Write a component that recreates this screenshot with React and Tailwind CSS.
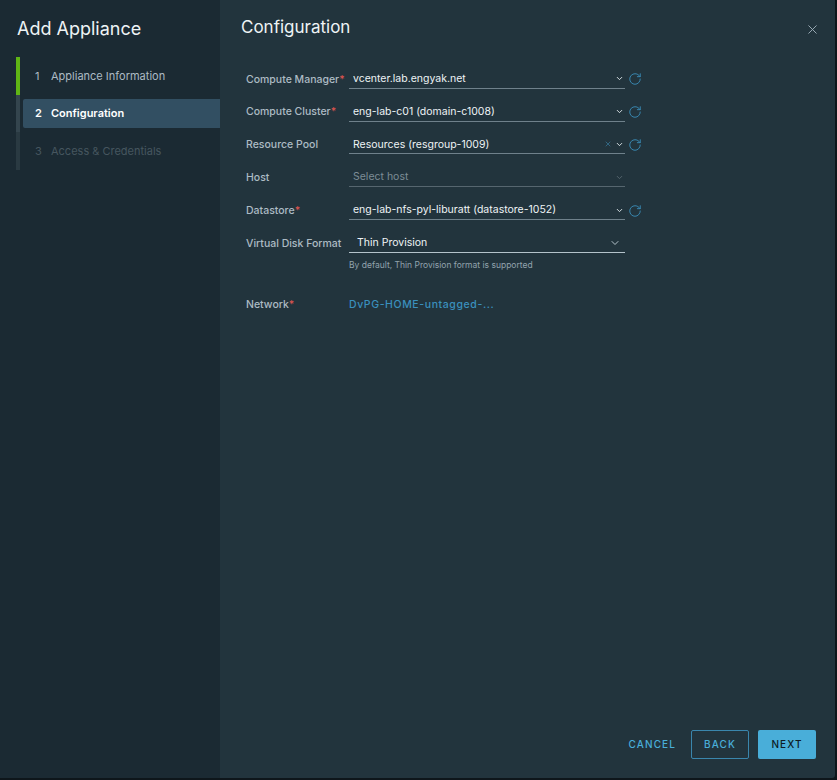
import React from "react";
import { ChevronDown, RotateCw, X } from "lucide-react";

const steps = [
  { num: "1", label: "Appliance Information", bar: "bg-[#60b515]", text: "text-[#adbbc4]" },
  { num: "2", label: "Configuration", bar: "bg-[#34454e]", text: "text-white font-semibold", active: true },
  { num: "3", label: "Access & Credentials", bar: "bg-[#2a3a42]", text: "text-[#46565f]" },
];

const fields = [
  { label: "Compute Manager", required: true, value: "vcenter.lab.engyak.net", left: "pl-[5px]" },
  { label: "Compute Cluster", required: true, value: "eng-lab-c01 (domain-c1008)" },
  { label: "Resource Pool", value: "Resources (resgroup-1009)", clear: true },
  { label: "Host", value: "Select host", disabled: true },
  { label: "Datastore", required: true, value: "eng-lab-nfs-pyl-liburatt (datastore-1052)" },
];

function FieldLabel({ label, required }) {
  return (
    <div className="w-[103px] shrink-0 whitespace-nowrap text-[10.5px] font-medium text-[#adbbc4]">
      {label}
      {required && <span className="text-[#d9534f]">*</span>}
    </div>
  );
}

function SelectRow({ field }) {
  return (
    <div className="flex h-[32.8px] items-center">
      <FieldLabel label={field.label} required={field.required} />
      <div
        className={`flex h-[19px] w-[276px] items-center border-b pl-[4px] pr-[1px] text-[10.5px] ${
          field.disabled
            ? "border-[#56666f] text-[#7d8d96]"
            : "border-[#6f818b] text-[#eef3f5]"
        }`}
      >
        <span className="flex-1 truncate">{field.value}</span>
        {field.clear && <X size={8} className="mr-[3px] text-[#3a7ea3]" />}
        <ChevronDown
          size={9}
          strokeWidth={2.5}
          className={field.disabled ? "text-[#56666f]" : "text-[#dfe6ea]"}
        />
      </div>
      {!field.disabled && (
        <RotateCw size={14} strokeWidth={1.5} className="ml-[3px] text-[#3a90bd]" />
      )}
    </div>
  );
}

export default function App() {
  return (
    <div className="h-[780px] w-[837px] bg-[#0e161b] pb-[2px] pr-[2px] font-['Inter',sans-serif]">
      <div className="flex h-full overflow-hidden rounded-br-[3px]">
        <aside className="w-[220px] shrink-0 bg-[#1b2a33] pt-[18px]">
          <h1 className="ml-[17px] text-[18px] leading-[22px] text-[#eef3f5]">Add Appliance</h1>
          <div className="ml-[16px] mt-[17px]">
            {steps.map((step) => (
              <div key={step.num} className="flex h-[37.7px]">
                <div className={`w-[4px] shrink-0 ${step.bar}`} />
                <div
                  className={`ml-[3px] flex h-[29px] flex-1 items-center self-center rounded-l-[2px] pl-[12px] text-[11px] ${step.text} ${
                    step.active ? "bg-[#324f62]" : ""
                  }`}
                >
                  <span className="w-[16px]">{step.num}</span>
                  {step.label}
                </div>
              </div>
            ))}
          </div>
        </aside>

        <main className="relative flex flex-1 flex-col bg-[#22343d] pl-[21px] pt-[16px]">
          <h2 className="text-[17px] leading-[22px] text-[#eef3f5]">Configuration</h2>
          <button className="absolute right-[15px] top-[22px] text-[#9fb0ba]">
            <X size={15} strokeWidth={1.5} />
          </button>

          <div className="mt-[25px] pl-[5px]">
            {fields.map((field) => (
              <SelectRow key={field.label} field={field} />
            ))}

            <div className="flex h-[33px] items-center">
              <FieldLabel label="Virtual Disk Format" />
              <div className="flex h-[19px] w-[276px] items-center border-b border-[#b4c3cb] pl-[8px] pr-[4px] text-[10.5px] text-[#eef3f5]">
                <span className="flex-1">Thin Provision</span>
                <ChevronDown size={12} className="text-[#b4c3cb]" />
              </div>
            </div>
            <p className="ml-[103px] text-[8.5px] leading-[10px] text-[#92a3ad]">
              By default, Thin Provision format is supported
            </p>

            <div className="mt-[18px] flex h-[33px] items-center">
              <FieldLabel label="Network" required />
              <span className="text-[10.5px] font-medium tracking-[0.6px] text-[#3a90bd]">
                DvPG-HOME-untagged-...
              </span>
            </div>
          </div>

          <div className="mt-auto mb-[19px] flex items-center justify-end pr-[19px] text-[10px] font-medium tracking-[1.1px]">
            <button className="mr-[15px] text-[#49aed9]">CANCEL</button>
            <button className="mr-[9px] h-[29px] w-[58px] rounded-[2px] border border-[#3a86ad] text-[#49aed9]">
              BACK
            </button>
            <button className="h-[29px] w-[58px] rounded-[2px] bg-[#49aed9] text-[#0e1c24]">
              NEXT
            </button>
          </div>
        </main>
      </div>
    </div>
  );
}
